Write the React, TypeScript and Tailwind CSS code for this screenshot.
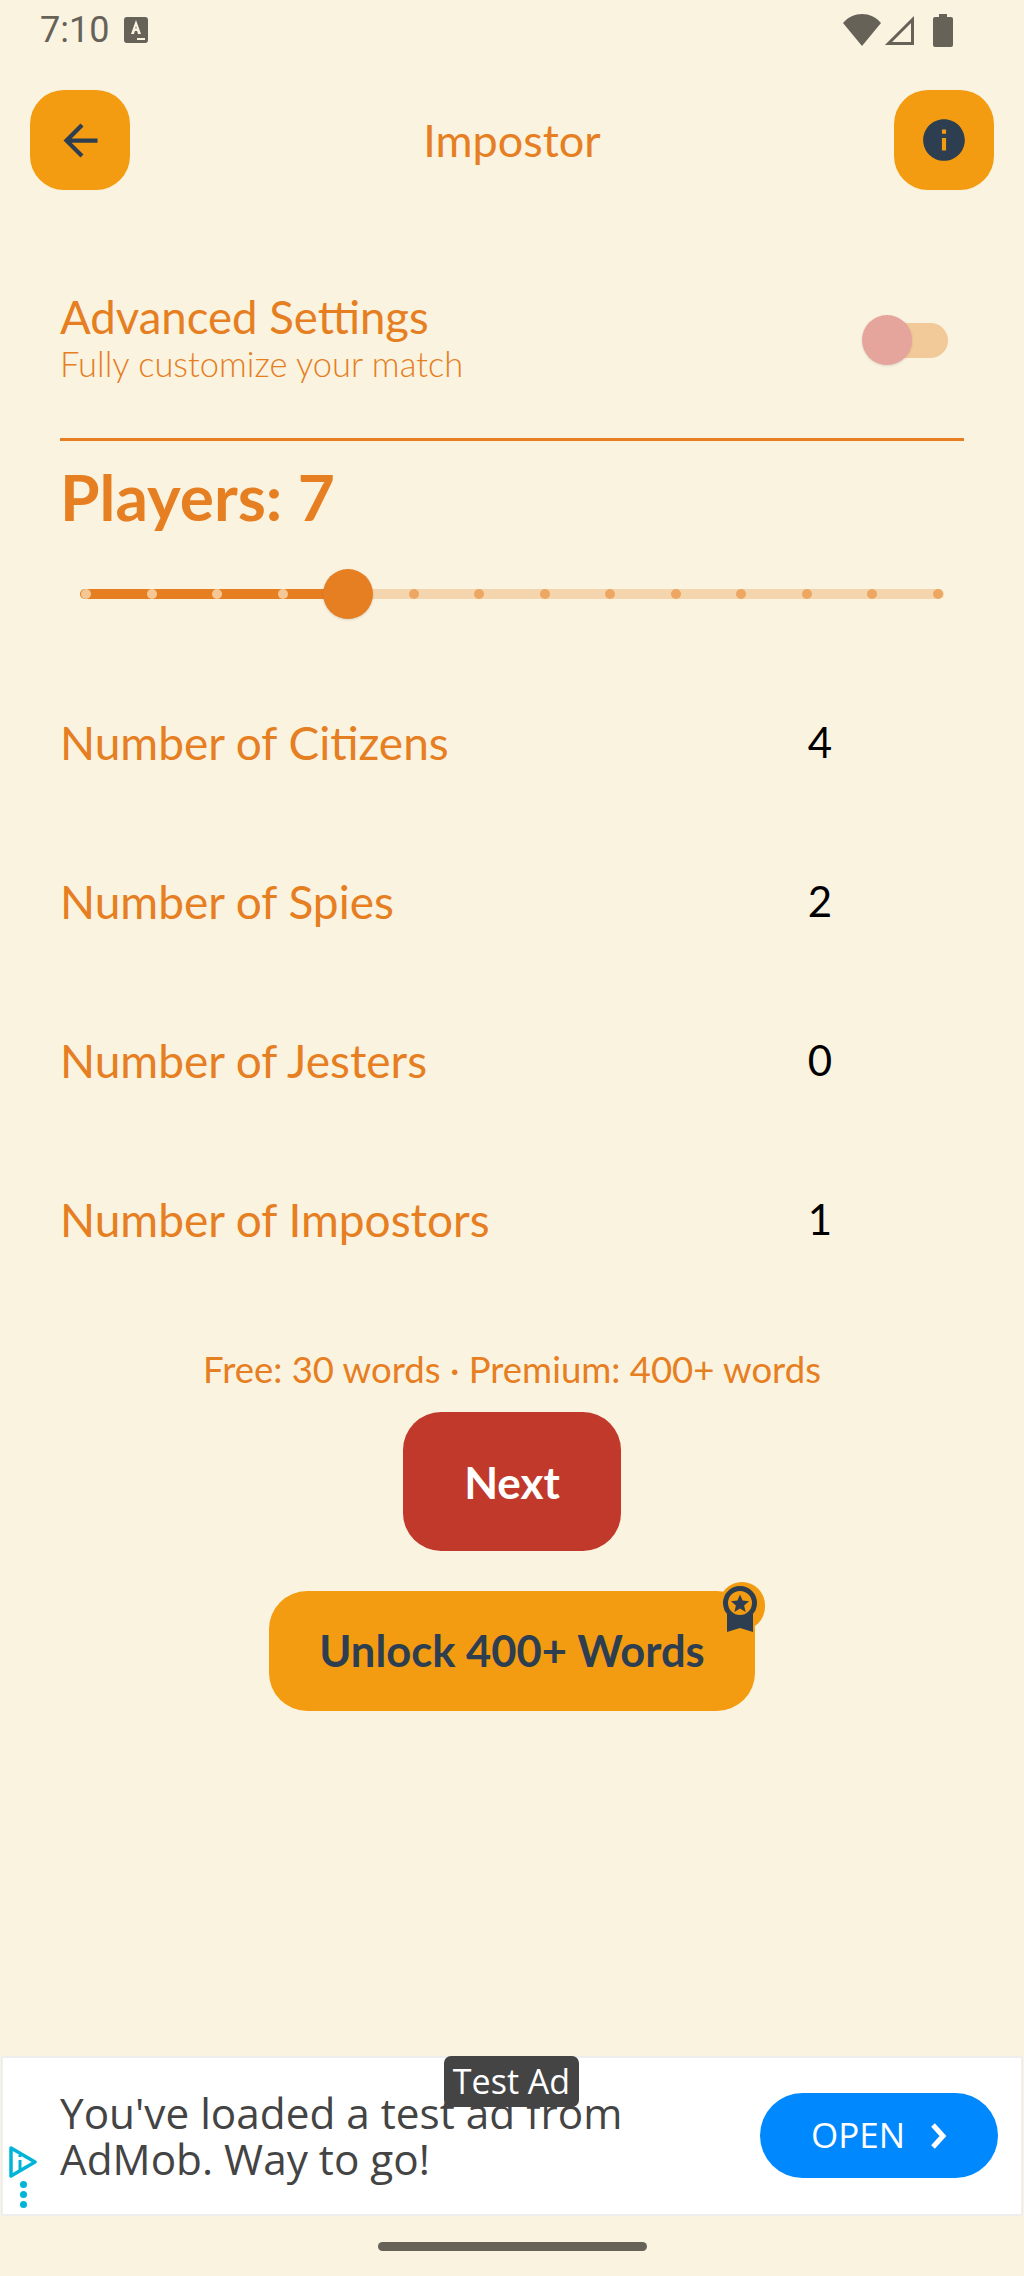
import React from 'react';
import { MdArrowBack, MdInfo } from 'react-icons/md';

const ROLES = [
  { label: 'Number of Citizens', value: 4 },
  { label: 'Number of Spies', value: 2 },
  { label: 'Number of Jesters', value: 0 },
  { label: 'Number of Impostors', value: 1 },
];

const SLIDER_STOPS = [3, 4, 5, 6, 7, 8, 9, 10, 11, 12, 13, 14, 15, 16];
const PLAYERS = 7;

function StatusBar() {
  return (
    <div className="flex h-[60px] shrink-0 items-center justify-between pl-[40px] pr-[71px] text-[#666258]">
      <div className="flex items-center gap-[15px]">
        <span className="font-['Roboto',sans-serif] text-[36px] leading-none">7:10</span>
        <svg width="24" height="26" viewBox="0 0 24 26">
          <rect width="24" height="26" rx="3" fill="#666258" />
          <path d="M12 3 L7 17 H10 L10.8 14 H13.2 L14 17 H17 Z M11.3 11.6 L12 9 L12.7 11.6 Z" fill="#faf3e0" />
          <rect x="13" y="21" width="8" height="2" fill="#faf3e0" />
        </svg>
      </div>
      <div className="flex items-center gap-[3px]">
        <svg width="38" height="32" viewBox="0 0 38 32">
          <path d="M0 9 C5 3 12 0 19 0 C26 0 33 3 38 9 L19 32 Z" fill="#666258" />
        </svg>
        <svg width="31" height="32" viewBox="0 0 31 32" className="mr-[15px]">
          <path d="M28.5 5.5 V29.5 H4.5 Z" fill="none" stroke="#666258" strokeWidth="3" />
        </svg>
        <svg width="20" height="33" viewBox="0 0 20 33">
          <path d="M6 0 H14 V3 H18 Q20 3 20 5 V31 Q20 33 18 33 H2 Q0 33 0 31 V5 Q0 3 2 3 H6 Z" fill="#666258" />
        </svg>
      </div>
    </div>
  );
}

function Header() {
  return (
    <div className="mt-[30px] flex items-center justify-between px-[30px]">
      <button className="flex h-[100px] w-[100px] items-center justify-center rounded-[34px] bg-[#f39c12]">
        <MdArrowBack size={51} color="#2c3e50" />
      </button>
      <h1 className="text-[45px] leading-none text-[#e67e22]">Impostor</h1>
      <button className="flex h-[100px] w-[100px] items-center justify-center rounded-[34px] bg-[#f39c12]">
        <MdInfo size={50} color="#2c3e50" />
      </button>
    </div>
  );
}

function AdvancedToggle() {
  return (
    <div className="mt-[100px] flex items-center justify-between pr-[16px]">
      <div>
        <div className="text-[45.5px] leading-[54px] text-[#e67e22]">Advanced Settings</div>
        <div className="text-[34.5px] font-light leading-[40px] text-[#e67e22]">Fully customize your match</div>
      </div>
      <div className="relative top-[3px] h-[35px] w-[60px] rounded-full bg-[#f2c998]">
        <div className="absolute left-[-26px] top-[-8px] h-[50px] w-[50px] rounded-full bg-[#e5a49c] shadow-sm" />
      </div>
    </div>
  );
}

function PlayerSlider() {
  return (
    <div className="relative mx-[20px] mt-[57px] flex h-[10px] items-center justify-between rounded-full bg-[#f5d5ae] px-[1px]">
      <div className="absolute left-0 h-[10px] w-[267px] rounded-full bg-[#e67e22]" />
      {SLIDER_STOPS.map((stop) =>
        stop === PLAYERS ? (
          <div key={stop} className="relative -mx-[20px] h-[50px] w-[50px] rounded-full bg-[#e67e22] shadow-sm" />
        ) : (
          <div
            key={stop}
            className={
              stop < PLAYERS
                ? 'relative h-[10px] w-[10px] rounded-full bg-[#f5c795]'
                : 'relative h-[10px] w-[10px] rounded-full bg-[#eda762]'
            }
          />
        )
      )}
    </div>
  );
}

function RoleRow({ label, value }: { label: string; value: number }) {
  return (
    <div className="flex h-[159px] items-center justify-between">
      <span className="text-[46px] text-[#e67e22]">{label}</span>
      <span className="mr-[114px] w-[60px] text-center text-[42px] text-black">{value}</span>
    </div>
  );
}

function MedalBadge() {
  return (
    <div className="absolute right-[-10px] top-[-9px] flex h-[48px] w-[46px] justify-center rounded-full bg-[#f39c12]">
      <svg width="36" height="48" viewBox="0 0 36 48" className="mt-[4px] -ml-[4px]">
        <path d="M5 28 V46 L18 42 L31 46 V28 Z" fill="#2c3e50" />
        <circle cx="18" cy="17" r="14.5" fill="#f39c12" stroke="#2c3e50" strokeWidth="5" />
        <path d="M18 8.5 L20.6 14.6 L27 15.2 L22.1 19.5 L23.6 26 L18 22.5 L12.4 26 L13.9 19.5 L9 15.2 L15.4 14.6 Z" fill="#2c3e50" />
      </svg>
    </div>
  );
}

function AdBanner() {
  return (
    <div className="relative mx-[1px] flex h-[160px] items-center border-2 border-[#eeeeee] bg-white font-['Open_Sans',sans-serif]">
      <div className="absolute left-[441px] top-[-2px] z-10 flex h-[51px] w-[135px] items-center justify-center rounded-[7px] bg-[#444444] text-[34px] text-white">
        Test Ad
      </div>
      <div className="absolute bottom-[6px] left-[5px] flex flex-col items-center gap-[3px]">
        <svg width="30" height="32" viewBox="0 0 30 32" fill="none">
          <path d="M3 2 L27 16 L3 30 Z" stroke="#00b4d8" strokeWidth="3.5" strokeLinejoin="round" />
          <path d="M12 14 V24 M12 9 V11" stroke="#00b4d8" strokeWidth="3" />
        </svg>
        <div className="flex flex-col gap-[3px]">
          <div className="h-[7px] w-[7px] rounded-full bg-[#00b4d8]" />
          <div className="h-[7px] w-[7px] rounded-full bg-[#00b4d8]" />
          <div className="h-[7px] w-[7px] rounded-full bg-[#00b4d8]" />
        </div>
      </div>
      <div className="ml-[57px] w-[680px] text-[42.3px] leading-[46px] text-[#444444]">
        You've loaded a test ad from
        <br />
        AdMob. Way to go!
      </div>
      <button className="absolute left-[757px] top-[35px] flex h-[85px] w-[238px] items-center justify-center gap-[24px] rounded-full bg-[#0088ff] text-[35px] text-white">
        OPEN
        <svg width="18" height="26" viewBox="0 0 18 26" fill="none">
          <path d="M4 2 L14 13 L4 24" stroke="white" strokeWidth="5" />
        </svg>
      </button>
    </div>
  );
}

export default function App() {
  return (
    <div className="flex h-[2276px] flex-col bg-[#faf3e0] font-['Lato',sans-serif]">
      <StatusBar />
      <Header />
      <main className="flex flex-1 flex-col px-[60px]">
        <AdvancedToggle />
        <div className="mt-[54px] h-[3px] bg-[#e67e22]" />
        <div className="mt-[21px] text-[64px] font-bold leading-[70px] text-[#e67e22]">Players: {PLAYERS}</div>
        <PlayerSlider />
        <div className="mt-[64px]">
          {ROLES.map((role) => (
            <RoleRow key={role.label} label={role.label} value={role.value} />
          ))}
        </div>
        <p className="mt-[50px] text-center text-[36.5px] leading-[40px] text-[#e67e22]">
          Free: 30 words · Premium: 400+ words
        </p>
        <button className="mx-auto mt-[23px] h-[139px] w-[218px] rounded-[38px] bg-[#c0392b] text-[44px] font-bold text-white">
          Next
        </button>
        <button className="relative mx-auto mt-[40px] h-[120px] w-[486px] rounded-[38px] bg-[#f39c12] text-[43.5px] font-bold text-[#2c3e50]">
          Unlock 400+ Words
          <MedalBadge />
        </button>
      </main>
      <AdBanner />
      <div className="mx-auto mb-[25px] mt-[26px] h-[9px] w-[269px] rounded-full bg-[#666258]" />
    </div>
  );
}
